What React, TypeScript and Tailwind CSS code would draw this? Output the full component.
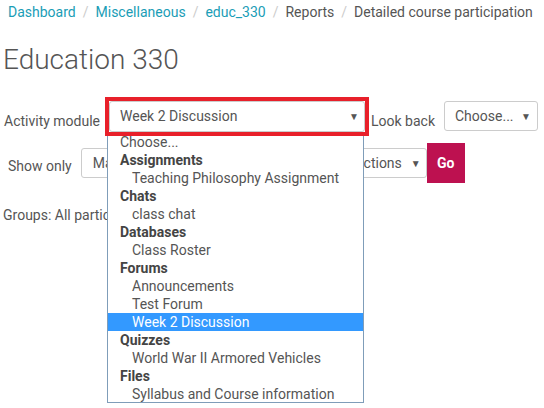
import React from "react";

const groups: { label: string; items: string[] }[] = [
    { label: "Assignments", items: ["Teaching Philosophy Assignment"] },
    { label: "Chats", items: ["class chat"] },
    { label: "Databases", items: ["Class Roster"] },
    { label: "Forums", items: ["Announcements", "Test Forum", "Week 2 Discussion"] },
    { label: "Quizzes", items: ["World War II Armored Vehicles"] },
    { label: "Files", items: ["Syllabus and Course information"] },
];

const selected = "Week 2 Discussion";

function Caret() {
    return <span className="text-[10px] text-[#555]">▼</span>;
}

export default function App() {
    return (
        <div className="relative w-[544px] h-[408px] bg-white overflow-hidden font-['Roboto',sans-serif] text-[#555] whitespace-nowrap">
            {/* Breadcrumb */}
            <nav className="flex items-center pl-2 pt-[3px] text-[14px] leading-[18px]">
                <span className="text-[#1a9db6]">Dashboard</span>
                <span className="px-[7px] text-[#ccc]">/</span>
                <span className="text-[#1a9db6]">Miscellaneous</span>
                <span className="px-[7px] text-[#ccc]">/</span>
                <span className="text-[#1a9db6]">educ_330</span>
                <span className="px-[7px] text-[#ccc]">/</span>
                <span>Reports</span>
                <span className="px-[7px] text-[#ccc]">/</span>
                <span>Detailed course participation</span>
            </nav>

            <h1 className="pl-[3px] mt-[21px] text-[28px] leading-[36px] font-light text-[#555]">Education 330</h1>

            {/* Row 1 */}
            <div className="flex items-start mt-[19px] pl-1">
                <label className="pt-[15px] text-[14px] leading-[18px] mr-[5px]">Activity module</label>
                <div className="relative z-10 border-4 border-[#e8202a]">
                    <div className="w-[256px] h-[31px] border border-[#ccc] rounded-[3px] bg-white flex items-center justify-between pl-[10px] pr-[5px] text-[14px] text-[#555]">
                        <span>{selected}</span>
                        <Caret />
                    </div>
                </div>
                <label className="pt-[15px] ml-[2px] text-[14px] leading-[18px]">Look back</label>
                <div className="ml-[9px] mt-[4px] w-[94px] h-[30px] border border-[#ccc] rounded-[3px] flex items-center justify-between pl-[10px] pr-[6px] text-[14px]">
                    <span>Choose...</span>
                    <Caret />
                </div>
            </div>

            {/* Row 2 */}
            <div className="flex items-start mt-[7px] pl-2">
                <label className="pt-[14px] text-[14px] leading-[18px] mr-[9px]">Show only</label>
                <div className="mt-[5px] w-[346px] h-[30px] border border-[#ccc] rounded-[3px] flex items-center justify-between pl-[11px] pr-[5px] text-[14px]">
                    <span>Manager</span>
                    <span className="flex items-center gap-[9px]">
                        <span>All actions</span>
                        <Caret />
                    </span>
                </div>
                <button className="w-[38px] h-[40px] bg-[#bd1150] text-white font-bold text-[14px]">Go</button>
            </div>

            <p className="pl-[3px] mt-[23px] text-[14px] leading-[18px]">Groups: All participants</p>

            {/* Open dropdown list */}
            <ul className="absolute left-[107px] top-[132px] w-[257px] h-[271px] border border-[#7f9db9] bg-white text-[14px] leading-[18px]">
                <li className="pl-3 h-[18px] text-[#555]">Choose...</li>
                {groups.map((g) => (
                    <React.Fragment key={g.label}>
                        <li className="pl-3 h-[18px] font-bold text-[#444]">{g.label}</li>
                        {g.items.map((it) => (
                            <li
                                key={it}
                                className={
                                    it === selected
                                        ? "pl-6 h-[18px] bg-[#3399ff] text-white"
                                        : "pl-6 h-[18px] text-[#555]"
                                }
                            >
                                {it}
                            </li>
                        ))}
                    </React.Fragment>
                ))}
            </ul>
        </div>
    );
}
